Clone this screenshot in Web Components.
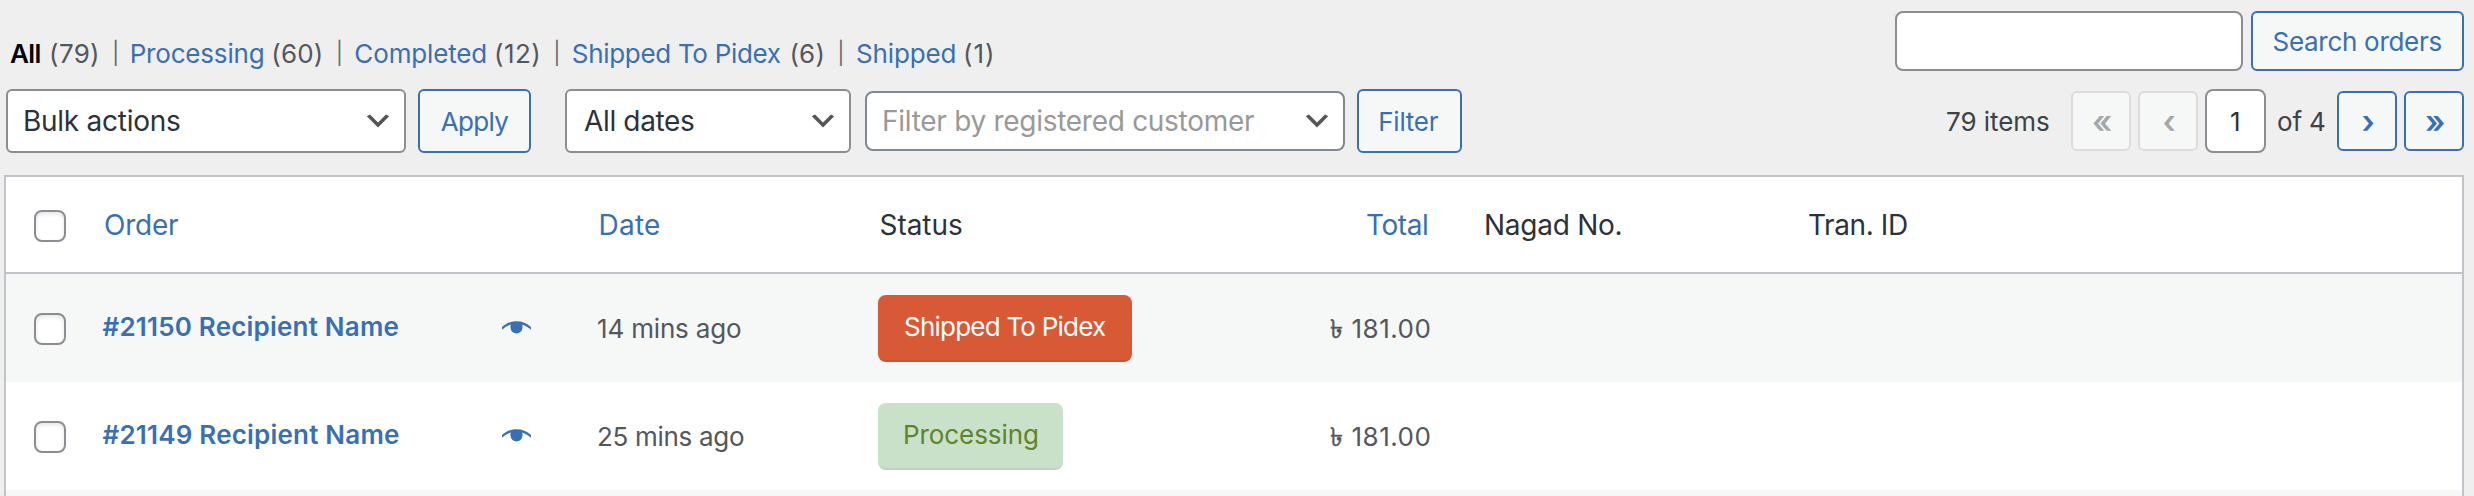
<!DOCTYPE html>
<html lang="en">
<head>
<meta charset="utf-8">
<title>Orders</title>
<style>
html,body{margin:0;height:496px;overflow:hidden;background:#efefef}
body{font-family:Inter,"Noto Sans","Liberation Sans",sans-serif;color:#53575d}
</style>
</head>
<body>
<orders-page></orders-page>
<script>
const LINK = '#3a6fb0';
const define = (name, html, setup) => {
  const tpl = document.createElement('template');
  tpl.innerHTML = html;
  customElements.define(name, class extends HTMLElement {
    connectedCallback() {
      if (this.shadowRoot) return;
      this.attachShadow({mode: 'open'}).append(tpl.content.cloneNode(true));
      if (setup) setup(this, this.shadowRoot);
    }
  });
};

/* A line of text whose box is exactly as wide as its visible ink. */
const ctx = document.createElement('canvas').getContext('2d');
define('fit-text', `<style>
:host{display:block;flex:none;white-space:pre;line-height:40px;height:40px}
span{display:block;width:max-content}
</style><span><slot></slot></span>`, (el, root) => {
  const size = el.getAttribute('size') || 26, weight = el.getAttribute('weight') || 400;
  const w = +el.getAttribute('w'), text = el.textContent, span = root.querySelector('span');
  ctx.font = `${weight} ${size}px Inter, "Noto Sans", "Liberation Sans", sans-serif`;
  const m = ctx.measureText(text);
  el.style.fontSize = size + 'px';
  el.style.fontWeight = weight;
  el.style.width = w + 'px';
  span.style.marginLeft = m.actualBoundingBoxLeft + 'px';
  if (text.length > 1) span.style.letterSpacing =
    (w - m.actualBoundingBoxLeft - m.actualBoundingBoxRight) / (text.length - 1) + 'px';
});

define('ui-button', `<style>
:host{display:flex;flex:none;box-sizing:border-box;height:64px;align-items:center;justify-content:center;padding-top:2px;border:2px solid ${LINK};border-radius:6px;background:#f5f8f7;color:${LINK}}
:host([small]){height:60px}
:host([disabled]){border-color:#dcdcdd;color:#a5a8aa}
</style><slot></slot>`, el => el.style.width = el.getAttribute('width') + 'px');

define('ui-select', `<style>
:host{display:flex;flex:none;box-sizing:border-box;height:64px;align-items:center;justify-content:space-between;border:2px solid #8d8c93;border-radius:6px;background:#fff;color:#2d3237;padding:0 10px 0 17px}
:host([search]){height:60px;border-color:#7f8893;border-radius:8px;color:#999}
svg{width:32px;height:32px;display:block}
</style><slot></slot><svg viewBox="0 0 20 20"><path fill="#555" d="M5 6l5 5 5-5 2 1-7 7-7-7z"/></svg>`,
el => el.style.width = el.getAttribute('width') + 'px');

define('ui-input', `<style>
:host{display:flex;flex:none;box-sizing:border-box;height:60px;padding-top:2px;align-items:center;justify-content:center;border:2px solid #8d8c93;border-radius:8px;background:#fff;color:#2d3237}
</style><slot></slot>`, el => el.style.width = el.getAttribute('width') + 'px');

define('ui-check', `<style>
:host{display:block;flex:none;box-sizing:border-box;width:32px;height:32px;border:2px solid #8d8c93;border-radius:8px;background:#fff;box-shadow:inset 0 2px 4px rgba(0,0,0,.1)}
</style>`);

define('eye-icon', `<style>:host{display:block;flex:none;width:29px;height:13px;margin-top:1px}svg{display:block}</style>
<svg width="29" height="13" viewBox="0 0 29 13" fill="${LINK}"><path d="M0 6C4 2.2 9 .2 14.500 .2S25 2.200 29 6V8.800C26.200 6.400 23.300 4.600 20.200 3.500C20.600 4.400 20.600 5.500 20.500 6.500A6 6 0 0 1 8.500 6.500C8.400 5.500 8.400 4.400 8.800 3.500C5.700 4.600 2.800 6.400 0 8.800Z"/></svg>`);

define('status-badge', `<style>
:host{display:flex;flex:none;box-sizing:border-box;height:67px;padding:0 0 1px 27px;align-items:center;border-radius:8px;background:#c9e0c9;color:#5f842a;border-bottom:2px solid rgba(0,0,0,.05)}
:host([shipped]){background:#d85936;color:#fff}
</style><slot></slot>`, el => el.style.width = el.getAttribute('width') + 'px');

define('taka-amount', `<style>
:host{display:flex;gap:9px}
.c{-webkit-text-stroke:.5px currentColor}
</style><fit-text class="c" w="13.500">৳</fit-text><fit-text w="77">181.00</fit-text>`);

define('status-nav', `<style>
:host{display:flex;height:40px;padding:34px 0 0 10px;color:#53575d}
.b{color:#000}
fit-text+fit-text{margin-left:var(--g,10.600px)}
i{display:block;width:18px;margin:0 0 0 16.900px;font-style:normal}
.s{color:#6a6d71;--g:16.900px;height:38px;line-height:38px}.l{--g:15.700px;color:${LINK}}
</style>
<fit-text class="b" weight="600" w="30.500">All</fit-text><fit-text w="46">(79)</fit-text>
<fit-text class="s" size="22" w="2">|</fit-text><fit-text class="l" w="131">Processing</fit-text><fit-text w="47.500">(60)</fit-text>
<fit-text class="s" size="22" w="2">|</fit-text><fit-text class="l" w="130">Completed</fit-text><fit-text w="42.300">(12)</fit-text>
<fit-text class="s" size="22" w="2">|</fit-text><fit-text class="l" w="208">Shipped To Pidex</fit-text><fit-text w="31">(6)</fit-text>
<fit-text class="s" size="22" w="2">|</fit-text><fit-text class="l" w="97.500">Shipped</fit-text><fit-text w="27">(1)</fit-text>`);

define('search-box', `<style>:host{display:flex;gap:8px;padding:11px 10px 0 0}</style>
<ui-input width="348"></ui-input><ui-button small width="213"><fit-text w="168">Search orders</fit-text></ui-button>`);

define('table-filters', `<style>
:host{display:flex;align-items:center;height:64px;padding-left:6px}
.a{margin-left:12px}.d{margin-left:34px}.c{margin-left:14px}
</style>
<ui-select width="400"><fit-text size="28" w="155">Bulk actions</fit-text></ui-select>
<ui-button class="a" width="113"><fit-text w="67.500">Apply</fit-text></ui-button>
<ui-select class="d" width="286"><fit-text size="28" w="110">All dates</fit-text></ui-select>
<ui-select search class="c" width="480"><fit-text size="28" w="370">Filter by registered customer</fit-text></ui-select>
<ui-button class="a" width="105"><fit-text w="58.500">Filter</fit-text></ui-button>`);

define('table-pager', `<style>
:host{display:flex;align-items:center;height:64px;padding-right:10px;color:#3c4247}
.n{margin:2px 22px 0 0}.p{margin-right:7px}.f{margin:2px 12px 0}
ui-input{height:64px}
</style>
<fit-text class="n" w="102">79 items</fit-text>
<ui-button small disabled class="p" width="60"><fit-text size="32" weight="600" w="16">«</fit-text></ui-button>
<ui-button small disabled class="p" width="60"><fit-text size="32" weight="600" w="9">‹</fit-text></ui-button>
<ui-input width="61"><fit-text w="9">1</fit-text></ui-input>
<fit-text class="f" w="47">of 4</fit-text>
<ui-button small class="p" width="60"><fit-text size="32" weight="600" w="9">›</fit-text></ui-button>
<ui-button small width="60"><fit-text size="32" weight="600" w="16">»</fit-text></ui-button>`);

const COLS = `display:grid;grid-template-columns:97px 399px 275px 280px 428px 324px 1fr;align-items:center;`;
define('table-head', `<style>
:host{${COLS}height:95px;background:#fff;border-bottom:2px solid #c2c3c8;color:#2d3237}
ui-check{margin:3px 0 0 28px}fit-text{margin-top:1px}.l{color:${LINK}}
.o{margin-left:2px}.d{margin-left:98.500px}.s{margin-left:103.500px}
.t{margin-left:310px}.n{margin-left:1px}
</style>
<ui-check></ui-check>
<fit-text class="l o" size="28" w="73">Order</fit-text>
<fit-text class="l d" size="28" w="58.500">Date</fit-text>
<fit-text class="s" size="28" w="81.500">Status</fit-text>
<fit-text class="l t" size="28" w="60">Total</fit-text>
<fit-text class="n" size="28" w="134.500">Nagad No.</fit-text>
<fit-text size="28" w="98">Tran. ID</fit-text>`);

define('order-row', `<style>
:host{${COLS}height:108px;background:#fff}
:host([odd]){background:#f5f8f7}
ui-check{margin:2px 0 0 28px}
.o{display:flex;align-items:center;justify-content:space-between;color:${LINK};padding-bottom:2px;width:428px}
.o ::slotted(*){margin-left:-.5px}
.d{margin:2px 0 0 96px}.s{margin:1px 0 0 101px}.t{margin:2px 0 0 273px}
</style>
<ui-check></ui-check>
<div class="o"><slot name="order"></slot><eye-icon></eye-icon></div>
<div class="d"><slot name="date"></slot></div>
<div class="s"><slot name="status"></slot></div>
<div class="t"><slot name="total"></slot></div>`);

define('orders-table', `<style>
:host{display:block;box-sizing:border-box;margin:22px 10px 0 4px;height:330px;border:2px solid #c2c3c8;border-bottom:0;overflow:hidden}
table-head{grid-template-columns:97px 399px 275px 280px 428px 324px 1fr}
</style>
<table-head></table-head>
<order-row odd>
<fit-text slot="order" weight="600" w="296">#21150 Recipient Name</fit-text>
<fit-text slot="date" w="143">14 mins ago</fit-text>
<status-badge slot="status" shipped width="254"><fit-text w="201">Shipped To Pidex</fit-text></status-badge>
<taka-amount slot="total"></taka-amount>
</order-row>
<order-row>
<fit-text slot="order" weight="600" w="296.500">#21149 Recipient Name</fit-text>
<fit-text slot="date" w="146">25 mins ago</fit-text>
<status-badge slot="status" width="185"><fit-text w="132">Processing</fit-text></status-badge>
<taka-amount slot="total"></taka-amount>
</order-row>
<order-row odd></order-row>`);

define('orders-page', `<style>
:host{display:block;height:496px;overflow:hidden}
.r{display:flex;justify-content:space-between}.top{height:89px}
</style>
<div class="r top"><status-nav></status-nav><search-box></search-box></div>
<div class="r"><table-filters></table-filters><table-pager></table-pager></div>
<orders-table></orders-table>`);
</script>
</body>
</html>
